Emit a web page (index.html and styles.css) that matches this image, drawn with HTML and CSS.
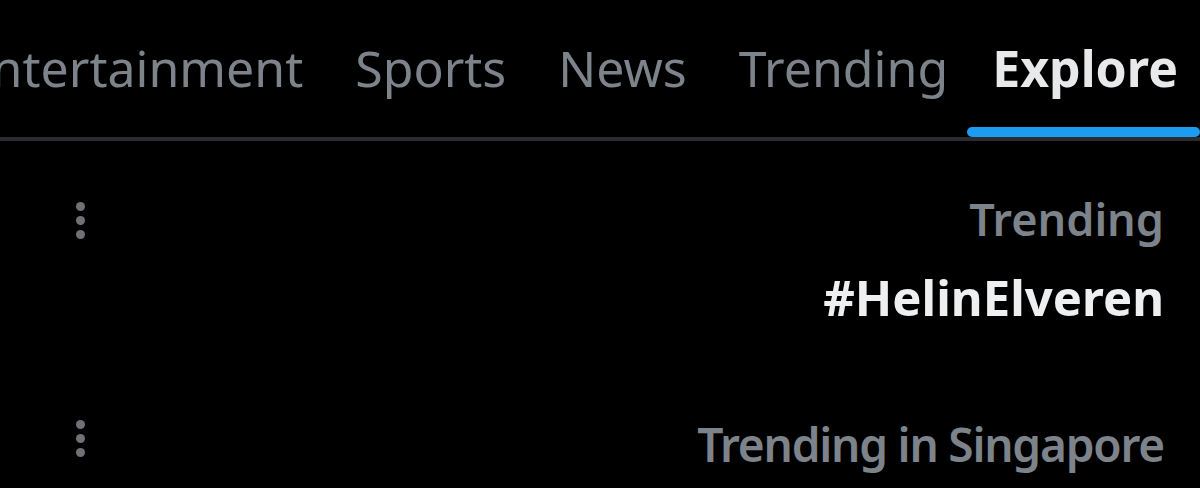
FILE: index.html
```html
<!DOCTYPE html>
<html lang="en">
<head>
<meta charset="utf-8">
<title>Explore</title>
<link rel="stylesheet" href="styles.css">
</head>
<body>
<div class="page">
  <nav class="tabs">
    <div class="tab"><span class="tab-label">Entertainment</span></div>
    <div class="tab"><span class="tab-label">Sports</span></div>
    <div class="tab"><span class="tab-label">News</span></div>
    <div class="tab"><span class="tab-label">Trending</span></div>
    <div class="tab active"><span class="tab-label">Explore</span><span class="indicator"></span></div>
  </nav>
  <section class="trend">
    <div class="more"><span class="dot"></span><span class="dot"></span><span class="dot"></span></div>
    <div class="trend-text">
      <div class="trend-meta">Trending</div>
      <div class="trend-title">#HelinElveren</div>
    </div>
  </section>
  <section class="trend">
    <div class="more"><span class="dot"></span><span class="dot"></span><span class="dot"></span></div>
    <div class="trend-text">
      <div class="trend-meta condensed">Trending in Singapore</div>
    </div>
  </section>
</div>
</body>
</html>
```
FILE: styles.css
```css
html, body {
  margin: 0;
  padding: 0;
  background: #000;
}
body {
  font-family: "Noto Sans", "Open Sans", sans-serif;
  width: 1200px;
  height: 488px;
  overflow: hidden;
}
.page {
  width: 1200px;
}
.tabs {
  display: flex;
  justify-content: flex-end;
  height: 137px;
  border-bottom: 4px solid #2a2d30;
  overflow: hidden;
}
.tab {
  flex: none;
  display: flex;
  flex-direction: column;
  align-items: center;
  justify-content: space-between;
  padding: 0 26px;
}
.tab:last-child {
  padding-right: 22px;
  padding-left: 18px;
}
.tab-label {
  margin-top: 37px;
  font-size: 50px;
  line-height: 62px;
  color: #7d838a;
  font-weight: 400;
}
.tab.active .tab-label {
  color: #e7e9ea;
  font-weight: 700;
  font-size: 50px;
}
.indicator {
  display: block;
  align-self: flex-end;
  margin-right: -22px;
  width: calc(100% + 47px);
  height: 10px;
  border-radius: 5px;
  background: #1d9bf0;
}
.trend {
  display: flex;
  justify-content: space-between;
  align-items: flex-start;
  padding: 48px 36px 0 76px;
}
.trend + .trend {
  padding-top: 87px;
}
.more {
  display: flex;
  flex-direction: column;
  gap: 5px;
  padding-top: 13px;
}
.trend + .trend .more {
  padding-top: 6px;
}
.dot {
  width: 9px;
  height: 9px;
  border-radius: 50%;
  background: #6e7276;
}
.trend-text {
  text-align: right;
}
.trend-meta {
  font-size: 45px;
  line-height: 60px;
  font-weight: 600;
  color: #7d838a;
}
.trend-meta.condensed {
  font-size: 46px;
  letter-spacing: -1.2px;
}
.trend-title {
  margin-top: 18px;
  font-size: 49px;
  line-height: 60px;
  font-weight: 700;
  color: #eeeff0;
}
```
